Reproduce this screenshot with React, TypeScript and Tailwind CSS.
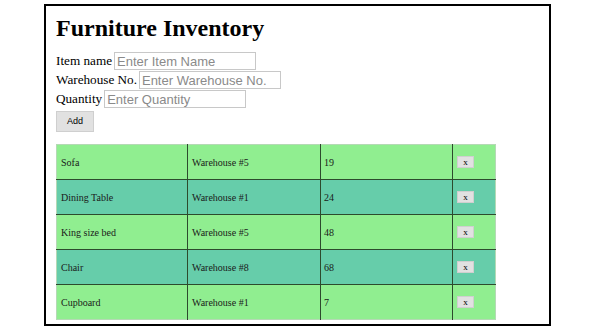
import React, {useState} from "react";

const serif = "font-['Liberation_Serif',_'Times_New_Roman',_serif]";
const sans = "font-['Liberation_Sans',_Arial,_sans-serif]";

type Item = {name: string; warehouse: string; qty: string};

export default function App() {
    const [items, setItems] = useState<Item[]>([
        {name: "Sofa", warehouse: "Warehouse #5", qty: "19"},
        {name: "Dining Table", warehouse: "Warehouse #1", qty: "24"},
        {name: "King size bed", warehouse: "Warehouse #5", qty: "48"},
        {name: "Chair", warehouse: "Warehouse #8", qty: "68"},
        {name: "Cupboard", warehouse: "Warehouse #1", qty: "7"},
    ]);
    const [name, setName] = useState("");
    const [warehouse, setWarehouse] = useState("");
    const [qty, setQty] = useState("");

    const add = () => {
        if (!name) return;
        setItems([...items, {name, warehouse, qty}]);
        setName("");
        setWarehouse("");
        setQty("");
    };

    const inputCls = `${sans} h-[18px] w-[142px] border border-[#c8c8c8] px-[2px] text-[13px] leading-none text-black placeholder:text-[#8a8a8a] outline-none`;

    return (
        <div className="w-[597px] h-[336px] bg-white pt-[4px] pl-[44px]">
            <div className={`${serif} w-[507px] h-[322px] border-2 border-black pl-[10px] pt-[8px]`}>
                <h1 className="text-[24px] font-bold leading-[28px] text-black">Furniture Inventory</h1>

                <div className="mt-[10px] flex flex-col text-[13.2px] text-black">
                    <div className="flex items-center h-[18px]">
                        <span className="mr-[2px]">Item name</span>
                        <input className={inputCls} placeholder="Enter Item Name" value={name}
                               onChange={(e) => setName(e.target.value)}/>
                    </div>
                    <div className="flex items-center h-[18px] mt-[1px]">
                        <span className="mr-[2px]">Warehouse No.</span>
                        <input className={inputCls} placeholder="Enter Warehouse No." value={warehouse}
                               onChange={(e) => setWarehouse(e.target.value)}/>
                    </div>
                    <div className="flex items-center h-[18px] mt-[1px]">
                        <span className="mr-[2px]">Quantity</span>
                        <input className={inputCls} placeholder="Enter Quantity" value={qty}
                               onChange={(e) => setQty(e.target.value)}/>
                    </div>
                </div>

                <button onClick={add}
                        className={`${sans} block mt-[3px] w-[38px] h-[21px] bg-[#e1e1e1] border border-[#cfcfcf] text-[9px] text-black`}>
                    Add
                </button>

                <table className="mt-[12px] w-[440px] border-collapse border border-[#b5d9b5] text-[10px] text-[#1a1a1a]">
                    <tbody>
                    {items.map((it, i) => (
                        <tr key={i} className={`h-[35px] ${i % 2 === 0 ? "bg-[#90ee90]" : "bg-[#66cdaa]"} ${i < items.length - 1 ? "border-b border-[#2d4a2d]" : ""}`}>
                            <td className="w-[131px] px-[4px] border-r border-[#2d4a2d]">{it.name}</td>
                            <td className="w-[133px] px-[4px] border-r border-[#2d4a2d]">{it.warehouse}</td>
                            <td className="w-[132px] px-[3px] border-r border-[#2d4a2d]">{it.qty}</td>
                            <td className="px-[4px]">
                                <button onClick={() => setItems(items.filter((_, j) => j !== i))}
                                        className="w-[17px] h-[12px] bg-[#e1e1e1] border border-[#cfcfcf] text-[9px] leading-none text-black flex items-center justify-center">
                                    x
                                </button>
                            </td>
                        </tr>
                    ))}
                    </tbody>
                </table>
            </div>
        </div>
    );
}
